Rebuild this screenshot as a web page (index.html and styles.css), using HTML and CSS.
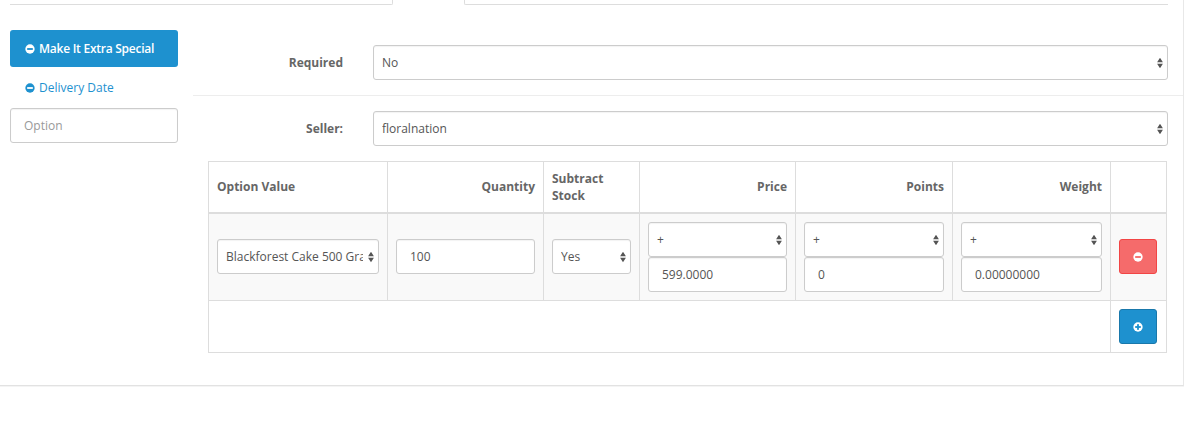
FILE: index.html
```html
<!DOCTYPE html>
<html lang="en">
<head>
<meta charset="utf-8">
<title>Product options</title>
<link rel="stylesheet" href="styles.css">
</head>
<body>
<svg class="sprite" width="0" height="0" aria-hidden="true">
  <symbol id="minus" viewBox="0 0 12 12"><circle cx="6" cy="6" r="5.6" fill="currentColor"/><rect class="bar" x="2.6" y="4.9" width="6.8" height="2.2"/></symbol>
  <symbol id="plus" viewBox="0 0 12 12"><circle cx="6" cy="6" r="5.6" fill="currentColor"/><rect class="bar" x="2.6" y="4.9" width="6.8" height="2.2"/><rect class="bar" x="4.9" y="2.6" width="2.2" height="6.8"/></symbol>
</svg>
<main class="panel">
  <div class="tabs">
    <div class="tab-line tab-line-left"></div>
    <div class="tab-gap"></div>
    <div class="tab-line tab-line-right"></div>
  </div>
  <div class="columns">
    <aside class="side">
      <a class="pill active"><svg class="ico"><use href="#minus"/></svg>Make It Extra Special</a>
      <a class="pill plain"><svg class="ico"><use href="#minus"/></svg>Delivery Date</a>
      <input class="field option-input" placeholder="Option">
    </aside>
    <section class="content">
      <div class="form-row first">
        <label class="form-label">Required</label>
        <select class="field select wide"><option>No</option></select>
      </div>
      <div class="form-row">
        <label class="form-label">Seller:</label>
        <select class="field select wide"><option>floralnation</option></select>
      </div>
      <table class="values">
        <colgroup>
          <col class="c1"><col class="c2"><col class="c3"><col class="c4"><col class="c5"><col class="c6"><col class="c7">
        </colgroup>
        <thead>
          <tr>
            <th>Option Value</th>
            <th class="right">Quantity</th>
            <th class="two">Subtract Stock</th>
            <th class="right">Price</th>
            <th class="right">Points</th>
            <th class="right">Weight</th>
            <th></th>
          </tr>
        </thead>
        <tbody>
          <tr class="shaded">
            <td class="mid"><select class="field select"><option>Blackforest Cake 500 Grams</option></select></td>
            <td class="mid"><input class="field" value="100"></td>
            <td class="mid"><select class="field select"><option>Yes</option></select></td>
            <td><select class="field select"><option>+</option></select><input class="field" value="599.0000"></td>
            <td><select class="field select"><option>+</option></select><input class="field" value="0"></td>
            <td><select class="field select"><option>+</option></select><input class="field" value="0.00000000"></td>
            <td class="mid"><button class="btn danger" aria-label="Remove"><svg class="ico btn-ico"><use href="#minus"/></svg></button></td>
          </tr>
        </tbody>
        <tfoot>
          <tr>
            <td colspan="6"></td>
            <td><button class="btn primary" aria-label="Add"><svg class="ico btn-ico"><use href="#plus"/></svg></button></td>
          </tr>
        </tfoot>
      </table>
    </section>
  </div>
</main>
</body>
</html>
```
FILE: styles.css
```css
* { box-sizing: border-box; }
html, body { margin: 0; padding: 0; height: 447px; overflow: hidden; background: #fff; }
body { font-family: "Open Sans", sans-serif; font-size: 12px; color: #666; }
.sprite { position: absolute; }
.panel { width: 1184px; height: 386px; border-right: 1px solid #e8e8e8; border-bottom: 1px solid #e2e2e2; box-shadow: 0 1px 0 #f4f4f4; }
.tabs { display: flex; height: 5px; padding-left: 10px; }
.tab-line { border-bottom: 1px solid #ddd; }
.tab-line-left { width: 383px; border-right: 1px solid #ddd; border-bottom-right-radius: 2px; }
.tab-gap { width: 71px; }
.tab-line-right { width: 704px; border-left: 1px solid #ddd; border-bottom-left-radius: 2px; }
.columns { display: flex; padding-top: 25px; }
.side { width: 193px; padding-left: 10px; flex: none; }
.pill { display: flex; align-items: center; width: 168px; height: 37px; padding-left: 15px; border-radius: 3px; color: #1e91cf; --bar: #fff; }
.pill.active { background: #1e91cf; color: #fff; font-weight: 600; letter-spacing: -0.25px; --bar: #1e91cf; }
.pill.plain { height: 41px; }
.bar { fill: var(--bar); }
.ico { width: 10px; height: 10px; margin-right: 4px; flex: none; }
.field { display: block; width: 100%; height: 35px; padding: 0 13px; font: 12px "Open Sans", sans-serif; color: #555; background: #fff; border: 1px solid #ccc; border-radius: 3px; outline: 0; box-shadow: inset 0 1px 1px rgba(0,0,0,.05); }
.field::placeholder { color: #999; opacity: 1; }
.option-input { width: 168px; }
.select { appearance: none; -webkit-appearance: none; padding: 0 15px 0 8px; text-overflow: clip; background-image: url("data:image/svg+xml,%3Csvg xmlns='http://www.w3.org/2000/svg' width='8' height='12'%3E%3Cpath d='M4 .8l2.9 4.4H1.1zM4 11.2L1.1 6.8h5.8z' fill='%23555'/%3E%3C/svg%3E"); background-repeat: no-repeat; background-position: right 3px center; }
.content { flex: 1; padding-top: 15px; min-width: 0; }
.form-row { display: flex; align-items: center; padding: 15px 15px 15px 0; }
.form-row.first { padding-top: 0; border-bottom: 1px solid #ededed; }
.form-label { width: 150px; text-align: right; font-weight: 700; margin-right: 30px; flex: none; }
.values { width: 958px; margin-left: 15px; border-collapse: collapse; table-layout: fixed; }
.c1 { width: 179px; } .c2 { width: 156px; } .c3 { width: 96px; } .c4 { width: 156px; } .c5 { width: 157px; } .c6 { width: 158px; } .c7 { width: 56px; }
.values th, .values td { border: 1px solid #ddd; padding: 8px; }
.values th { height: 51px; text-align: left; font-weight: 700; line-height: 17px; border-bottom-width: 2px; vertical-align: middle; padding-bottom: 10px; }
.values th.two { padding-bottom: 8px; }
.values th.right { text-align: right; }
.shaded td { height: 87px; background: #f9f9f9; }
.values .shaded td.mid { padding-bottom: 9px; }
.values tfoot td { height: 52px; }
.btn { display: inline-flex; align-items: center; justify-content: center; width: 38px; height: 35px; padding: 0; border-radius: 3px; border: 1px solid; vertical-align: middle; }
.btn-ico { margin: 0; color: #fff; }
.danger { background: #f56b6b; border-color: #f24545; --bar: #f56b6b; }
.primary { background: #1e91cf; border-color: #1978ab; --bar: #1e91cf; }
```
